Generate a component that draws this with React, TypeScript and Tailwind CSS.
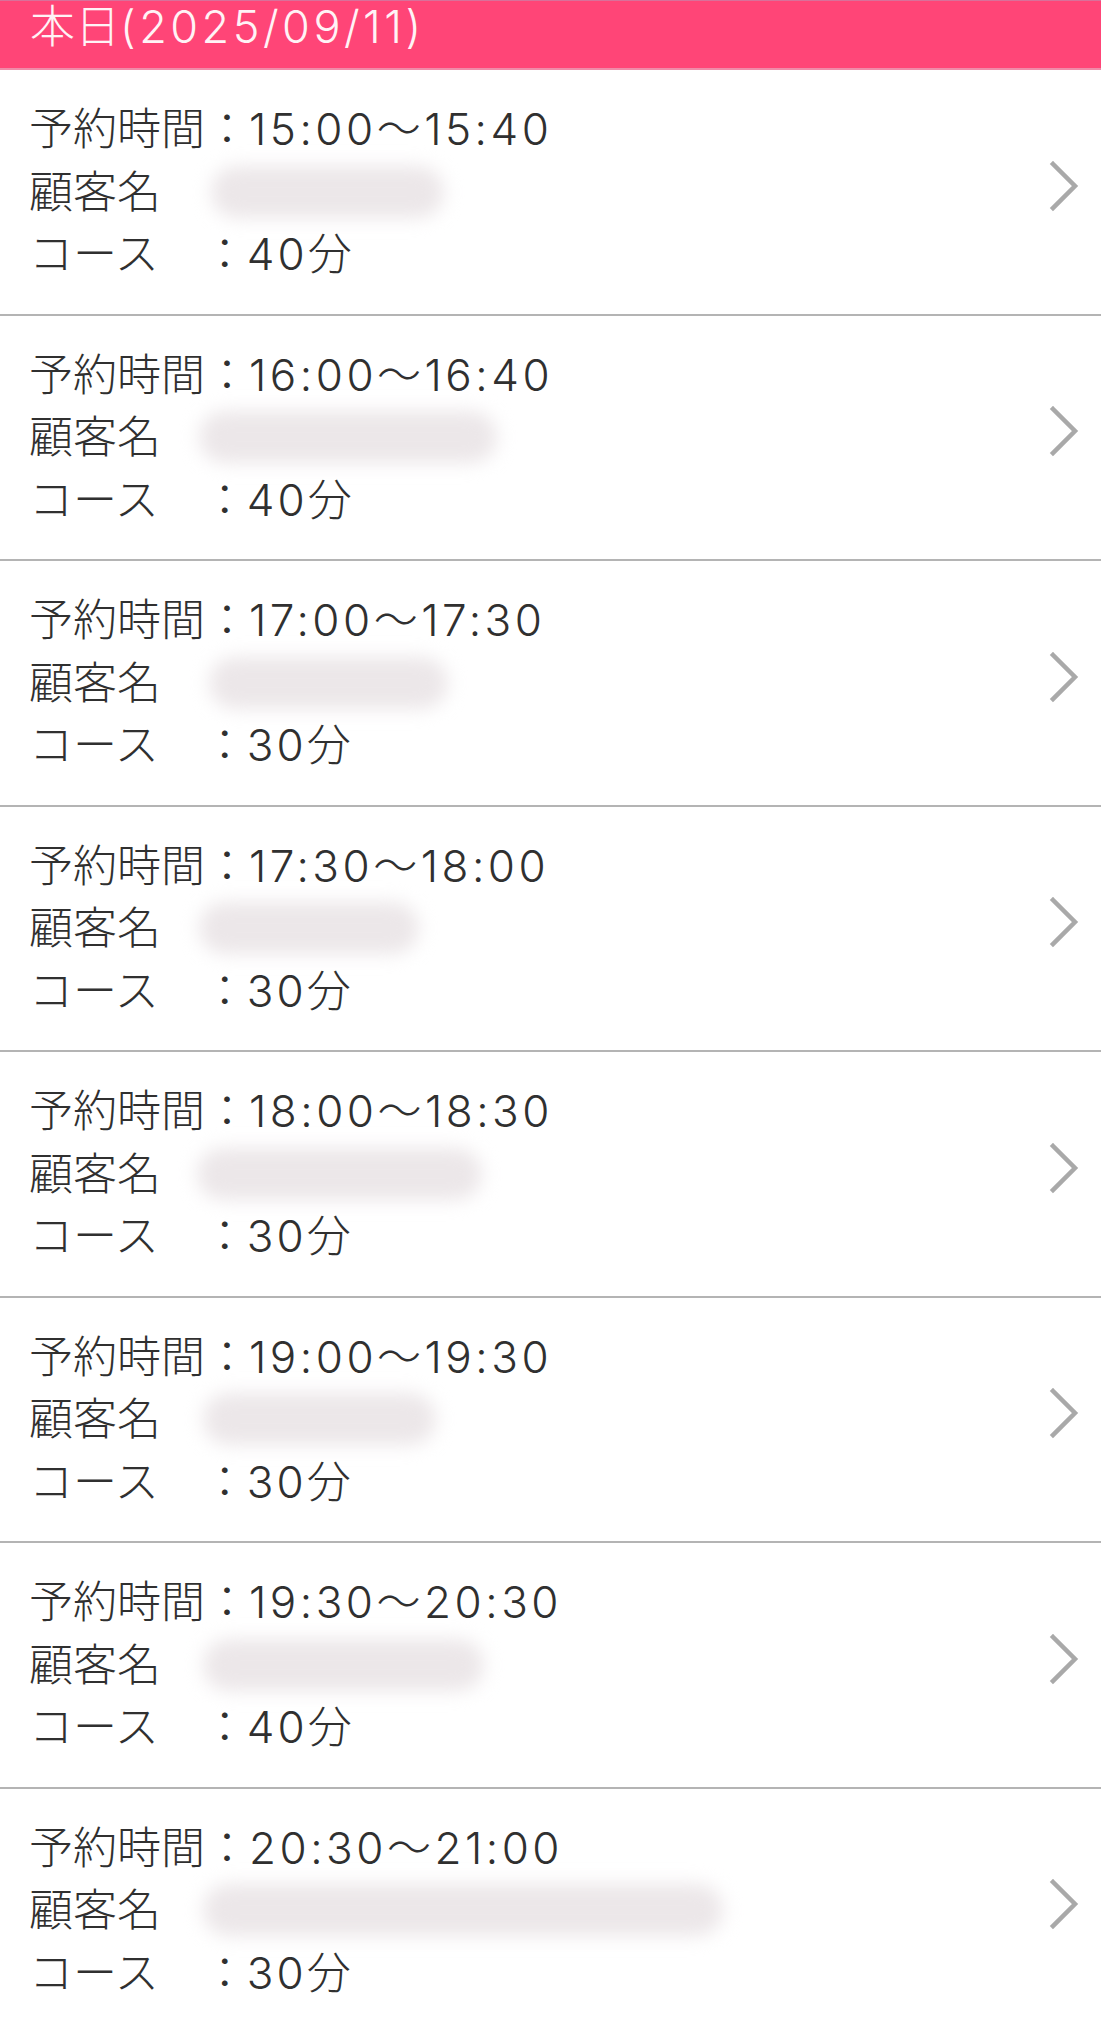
import React from "react";

type Item = { time: string; course: string; blob: number };

const items: Item[] = [
  { time: "15:00〜15:40", course: "40", blob: 233 },
  { time: "16:00〜16:40", course: "40", blob: 298 },
  { time: "17:00〜17:30", course: "30", blob: 239 },
  { time: "17:30〜18:00", course: "30", blob: 220 },
  { time: "18:00〜18:30", course: "30", blob: 285 },
  { time: "19:00〜19:30", course: "30", blob: 233 },
  { time: "19:30〜20:30", course: "40", blob: 281 },
  { time: "20:30〜21:00", course: "30", blob: 520 },
];

const blobOffsets = [14, 2, 12, 2, 0, 6, 6, 6];

function Chevron() {
  return (
    <svg width="34" height="52" viewBox="0 0 34 52" className="shrink-0">
      <polyline
        points="6,4 28,26 6,48"
        fill="none"
        stroke="#a9a9a9"
        strokeWidth="4.5"
        strokeLinecap="square"
        strokeLinejoin="miter"
      />
    </svg>
  );
}

export default function App() {
  return (
    <div
      className="w-[1101px] min-h-[2028px] bg-white text-[#303030] font-light"
      style={{ fontFamily: '"Inter", "Noto Sans CJK JP", "Noto Sans", sans-serif' }}
    >
      <div className="h-[70px] bg-[#ff4577] border-t border-[#d9709a] border-b-2 border-b-[#f08aa8] pl-[30px]">
        <div className="text-[45px] leading-[52px] text-[#fff3f6]">
          本日<span className="tracking-[3.5px]">(2025/09/11)</span>
        </div>
      </div>
      {items.map((it, i) => (
        <div
          key={i}
          className="flex items-center justify-between border-b-[2.5px] border-[#b4b4b4] pl-[29px] pr-[20px] py-[28px]"
        >
          <div className="text-[44px] leading-[62.5px]">
            <div>
              予約時間：<span className="tracking-[3.5px]">{it.time}</span>
            </div>
            <div className="flex items-center">
              <span>顧客名</span>
              <div
                className="h-[52px] rounded-full bg-[#ece7e9] blur-[9px]"
                style={{ width: it.blob, marginLeft: 36 + blobOffsets[i] }}
              />
            </div>
            <div>
              コース　：<span className="tracking-[3px]">{it.course}</span>分
            </div>
          </div>
          <div className="-mt-[12px]">
            <Chevron />
          </div>
        </div>
      ))}
    </div>
  );
}
